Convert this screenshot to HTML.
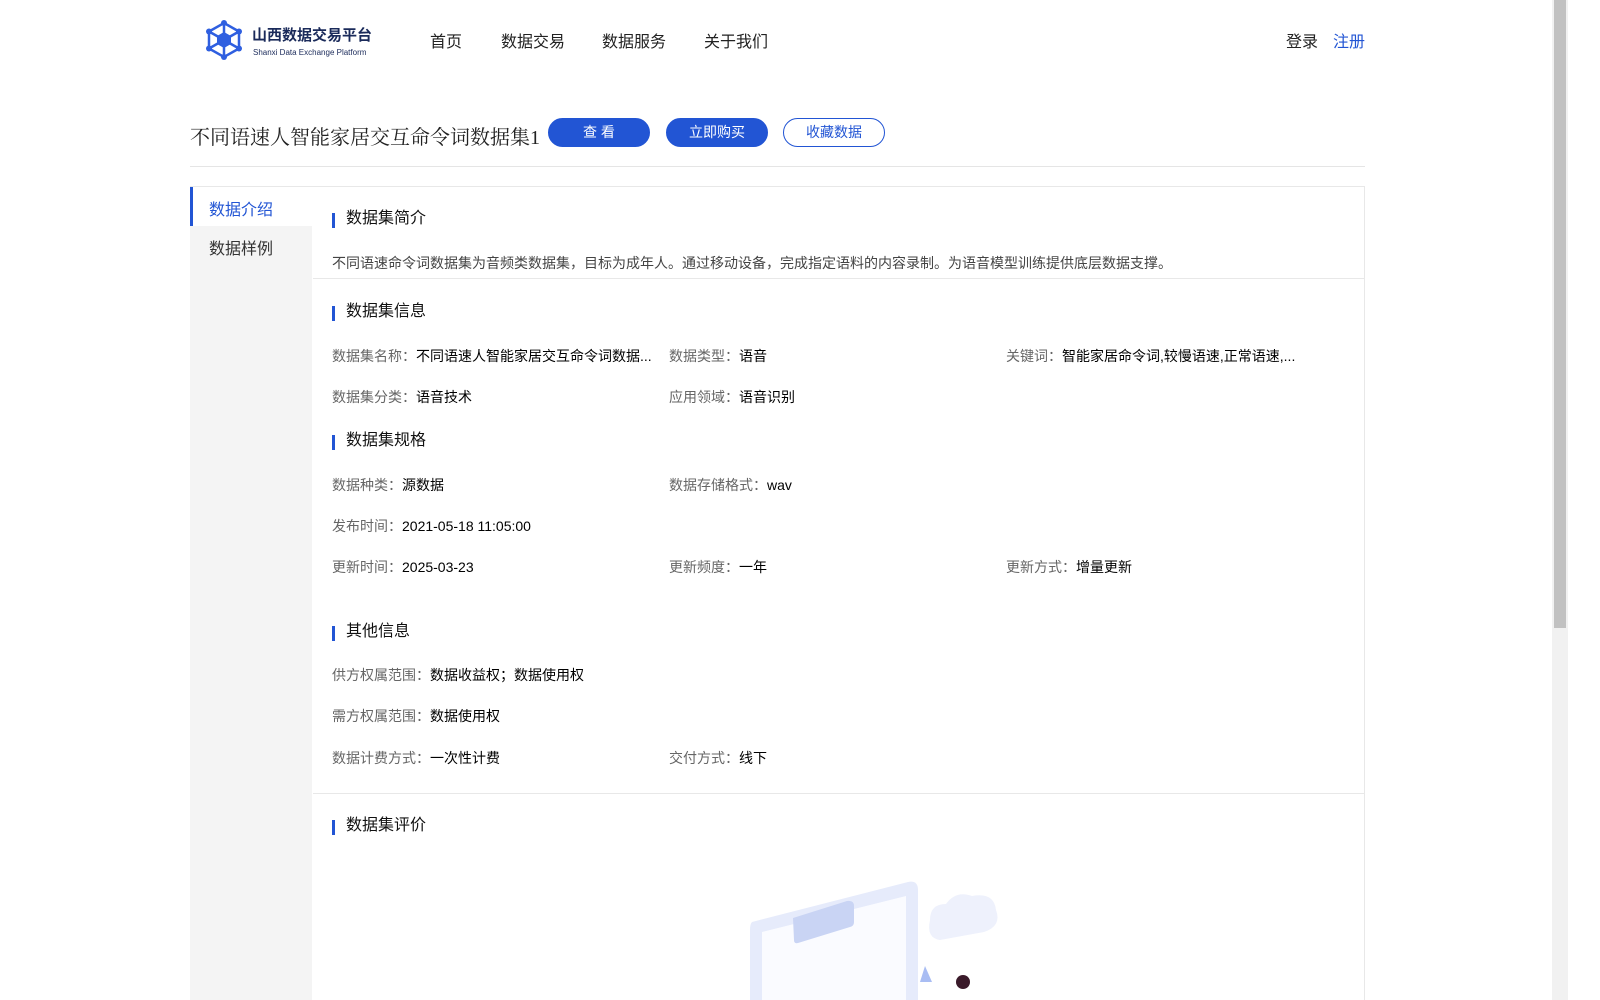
<!DOCTYPE html>
<html style="height:1000px;overflow:hidden"><head><meta charset="utf-8"><style>
*{margin:0;padding:0;box-sizing:border-box}
body{width:1600px;height:1000px;overflow:hidden;background:#fff;font-family:"Liberation Sans","Noto Sans CJK SC",sans-serif;color:#000;position:relative}
.abs{position:absolute}
.nav a{position:absolute;top:28px;font-size:16px;color:#222;white-space:nowrap}
.btn{position:absolute;top:118px;height:29px;width:102px;border-radius:15px;font-size:14px;text-align:center;line-height:27px;border:1px solid #2255d4}
.h{position:absolute;left:332px;font-size:16px;color:#111;padding-left:14px;line-height:20px}
.h:before{content:"";position:absolute;left:0;top:4px;width:3px;height:15px;background:#2255d4}
.r{position:absolute;font-size:14px;white-space:nowrap;line-height:18px;color:#000}
.r span{color:#666}
</style></head><body>
<svg class="abs" style="left:204px;top:20px" width="40" height="40" viewBox="0 0 40 40">
<g stroke="#2f5fe0" stroke-width="2.5" fill="none"><polygon points="20,3 35,11.5 35,28.5 20,37 5,28.5 5,11.5"/><line x1="20" y1="3" x2="20" y2="37"/><line x1="5" y1="11.5" x2="35" y2="28.5"/><line x1="35" y1="11.5" x2="5" y2="28.5"/></g>
<polygon points="20,12 27,16 27,24 20,28 13,24 13,16" fill="#2f5fe0"/>
<g fill="#2f5fe0"><circle cx="20" cy="3" r="3"/><circle cx="35" cy="11.5" r="3"/><circle cx="35" cy="28.5" r="3"/><circle cx="20" cy="37" r="3"/><circle cx="5" cy="28.5" r="3"/><circle cx="5" cy="11.5" r="3"/></g></svg>
<div class="abs" style="left:252px;top:24px;font-size:15px;font-weight:bold;color:#1a2a5a">山西数据交易平台</div>
<div class="abs" style="left:253px;top:48px;font-size:8px;color:#1a2a5a">Shanxi Data Exchange Platform</div>
<div class="nav"><a style="left:430px">首页</a><a style="left:501px">数据交易</a><a style="left:602px">数据服务</a><a style="left:704px">关于我们</a><a style="left:1286px">登录</a><a style="left:1333px;color:#2255d4">注册</a></div>
<div class="abs" style="left:190px;top:121px;font-size:20px;font-family:'Liberation Serif','Noto Serif CJK SC',serif;color:#222">不同语速人智能家居交互命令词数据集1</div>
<div class="btn" style="left:548px;background:#2255d4;color:#fff">查 看</div>
<div class="btn" style="left:666px;background:#2255d4;color:#fff">立即购买</div>
<div class="btn" style="left:783px;background:#fff;color:#2255d4">收藏数据</div>
<div class="abs" style="left:190px;top:166px;width:1175px;height:1px;background:#e5e5e5"></div>
<div class="abs" style="left:190px;top:186px;width:1175px;height:814px;border:1px solid #e8e8e8;border-bottom:none"></div>
<div class="abs" style="left:190px;top:226px;width:122px;height:774px;background:#f4f4f4"></div>
<div class="abs" style="left:190px;top:187px;width:3px;height:39px;background:#2255d4"></div>
<div class="abs" style="left:209px;top:196px;font-size:16px;color:#2255d4">数据介绍</div>
<div class="abs" style="left:209px;top:235px;font-size:16px;color:#333">数据样例</div>
<div class="h" style="top:209px">数据集简介</div>
<div class="r" style="left:332px;top:254px;color:#444">不同语速命令词数据集为音频类数据集，目标为成年人。通过移动设备，完成指定语料的内容录制。为语音模型训练提供底层数据支撑。</div>
<div class="abs" style="left:313px;top:278px;width:1051px;height:1px;background:#e8e8e8"></div>
<div class="h" style="top:302px">数据集信息</div>
<div class="r" style="left:332px;top:347px"><span>数据集名称：</span>不同语速人智能家居交互命令词数据...</div>
<div class="r" style="left:669px;top:347px"><span>数据类型：</span>语音</div>
<div class="r" style="left:1006px;top:347px"><span>关键词：</span>智能家居命令词,较慢语速,正常语速,...</div>
<div class="r" style="left:332px;top:388px"><span>数据集分类：</span>语音技术</div>
<div class="r" style="left:669px;top:388px"><span>应用领域：</span>语音识别</div>
<div class="h" style="top:431px">数据集规格</div>
<div class="r" style="left:332px;top:476px"><span>数据种类：</span>源数据</div>
<div class="r" style="left:669px;top:476px"><span>数据存储格式：</span>wav</div>
<div class="r" style="left:332px;top:517px"><span>发布时间：</span>2021-05-18 11:05:00</div>
<div class="r" style="left:332px;top:558px"><span>更新时间：</span>2025-03-23</div>
<div class="r" style="left:669px;top:558px"><span>更新频度：</span>一年</div>
<div class="r" style="left:1006px;top:558px"><span>更新方式：</span>增量更新</div>
<div class="h" style="top:622px">其他信息</div>
<div class="r" style="left:332px;top:666px"><span>供方权属范围：</span>数据收益权；数据使用权</div>
<div class="r" style="left:332px;top:707px"><span>需方权属范围：</span>数据使用权</div>
<div class="r" style="left:332px;top:749px"><span>数据计费方式：</span>一次性计费</div>
<div class="r" style="left:669px;top:749px"><span>交付方式：</span>线下</div>
<div class="abs" style="left:313px;top:793px;width:1051px;height:1px;background:#e8e8e8"></div>
<div class="h" style="top:816px">数据集评价</div>
<svg class="abs" style="left:740px;top:870px" width="270" height="130" viewBox="0 0 270 130">
<path d="M12 52 L168 12 Q178 10 178 20 L178 130 L10 130 L10 60 Q10 54 12 52Z" fill="#e6ebfb"/>
<path d="M22 62 L166 26 L166 130 L22 130Z" fill="#fafbff"/>
<path d="M53 48 L107 31 Q114 30 114 36 L114 52 Q114 56 110 57 L58 73 Q54 74 54 70Z" fill="#c9d4f4"/>
<path d="M190 50 Q190 34 206 34 Q216 20 232 26 Q254 22 256 40 Q262 56 244 62 L200 70 Q186 68 190 50Z" fill="#eef1fc"/>
<path d="M185 96 L192 112 L180 112Z" fill="#a9bdf3"/>
<circle cx="223" cy="112" r="7" fill="#3a1a2a"/>
</svg>
<div class="abs" style="left:1552px;top:0;width:16px;height:1000px;background:#f1f1f1"></div>
<div class="abs" style="left:1554px;top:0;width:12px;height:628px;background:#c1c1c1"></div>
</body></html>
